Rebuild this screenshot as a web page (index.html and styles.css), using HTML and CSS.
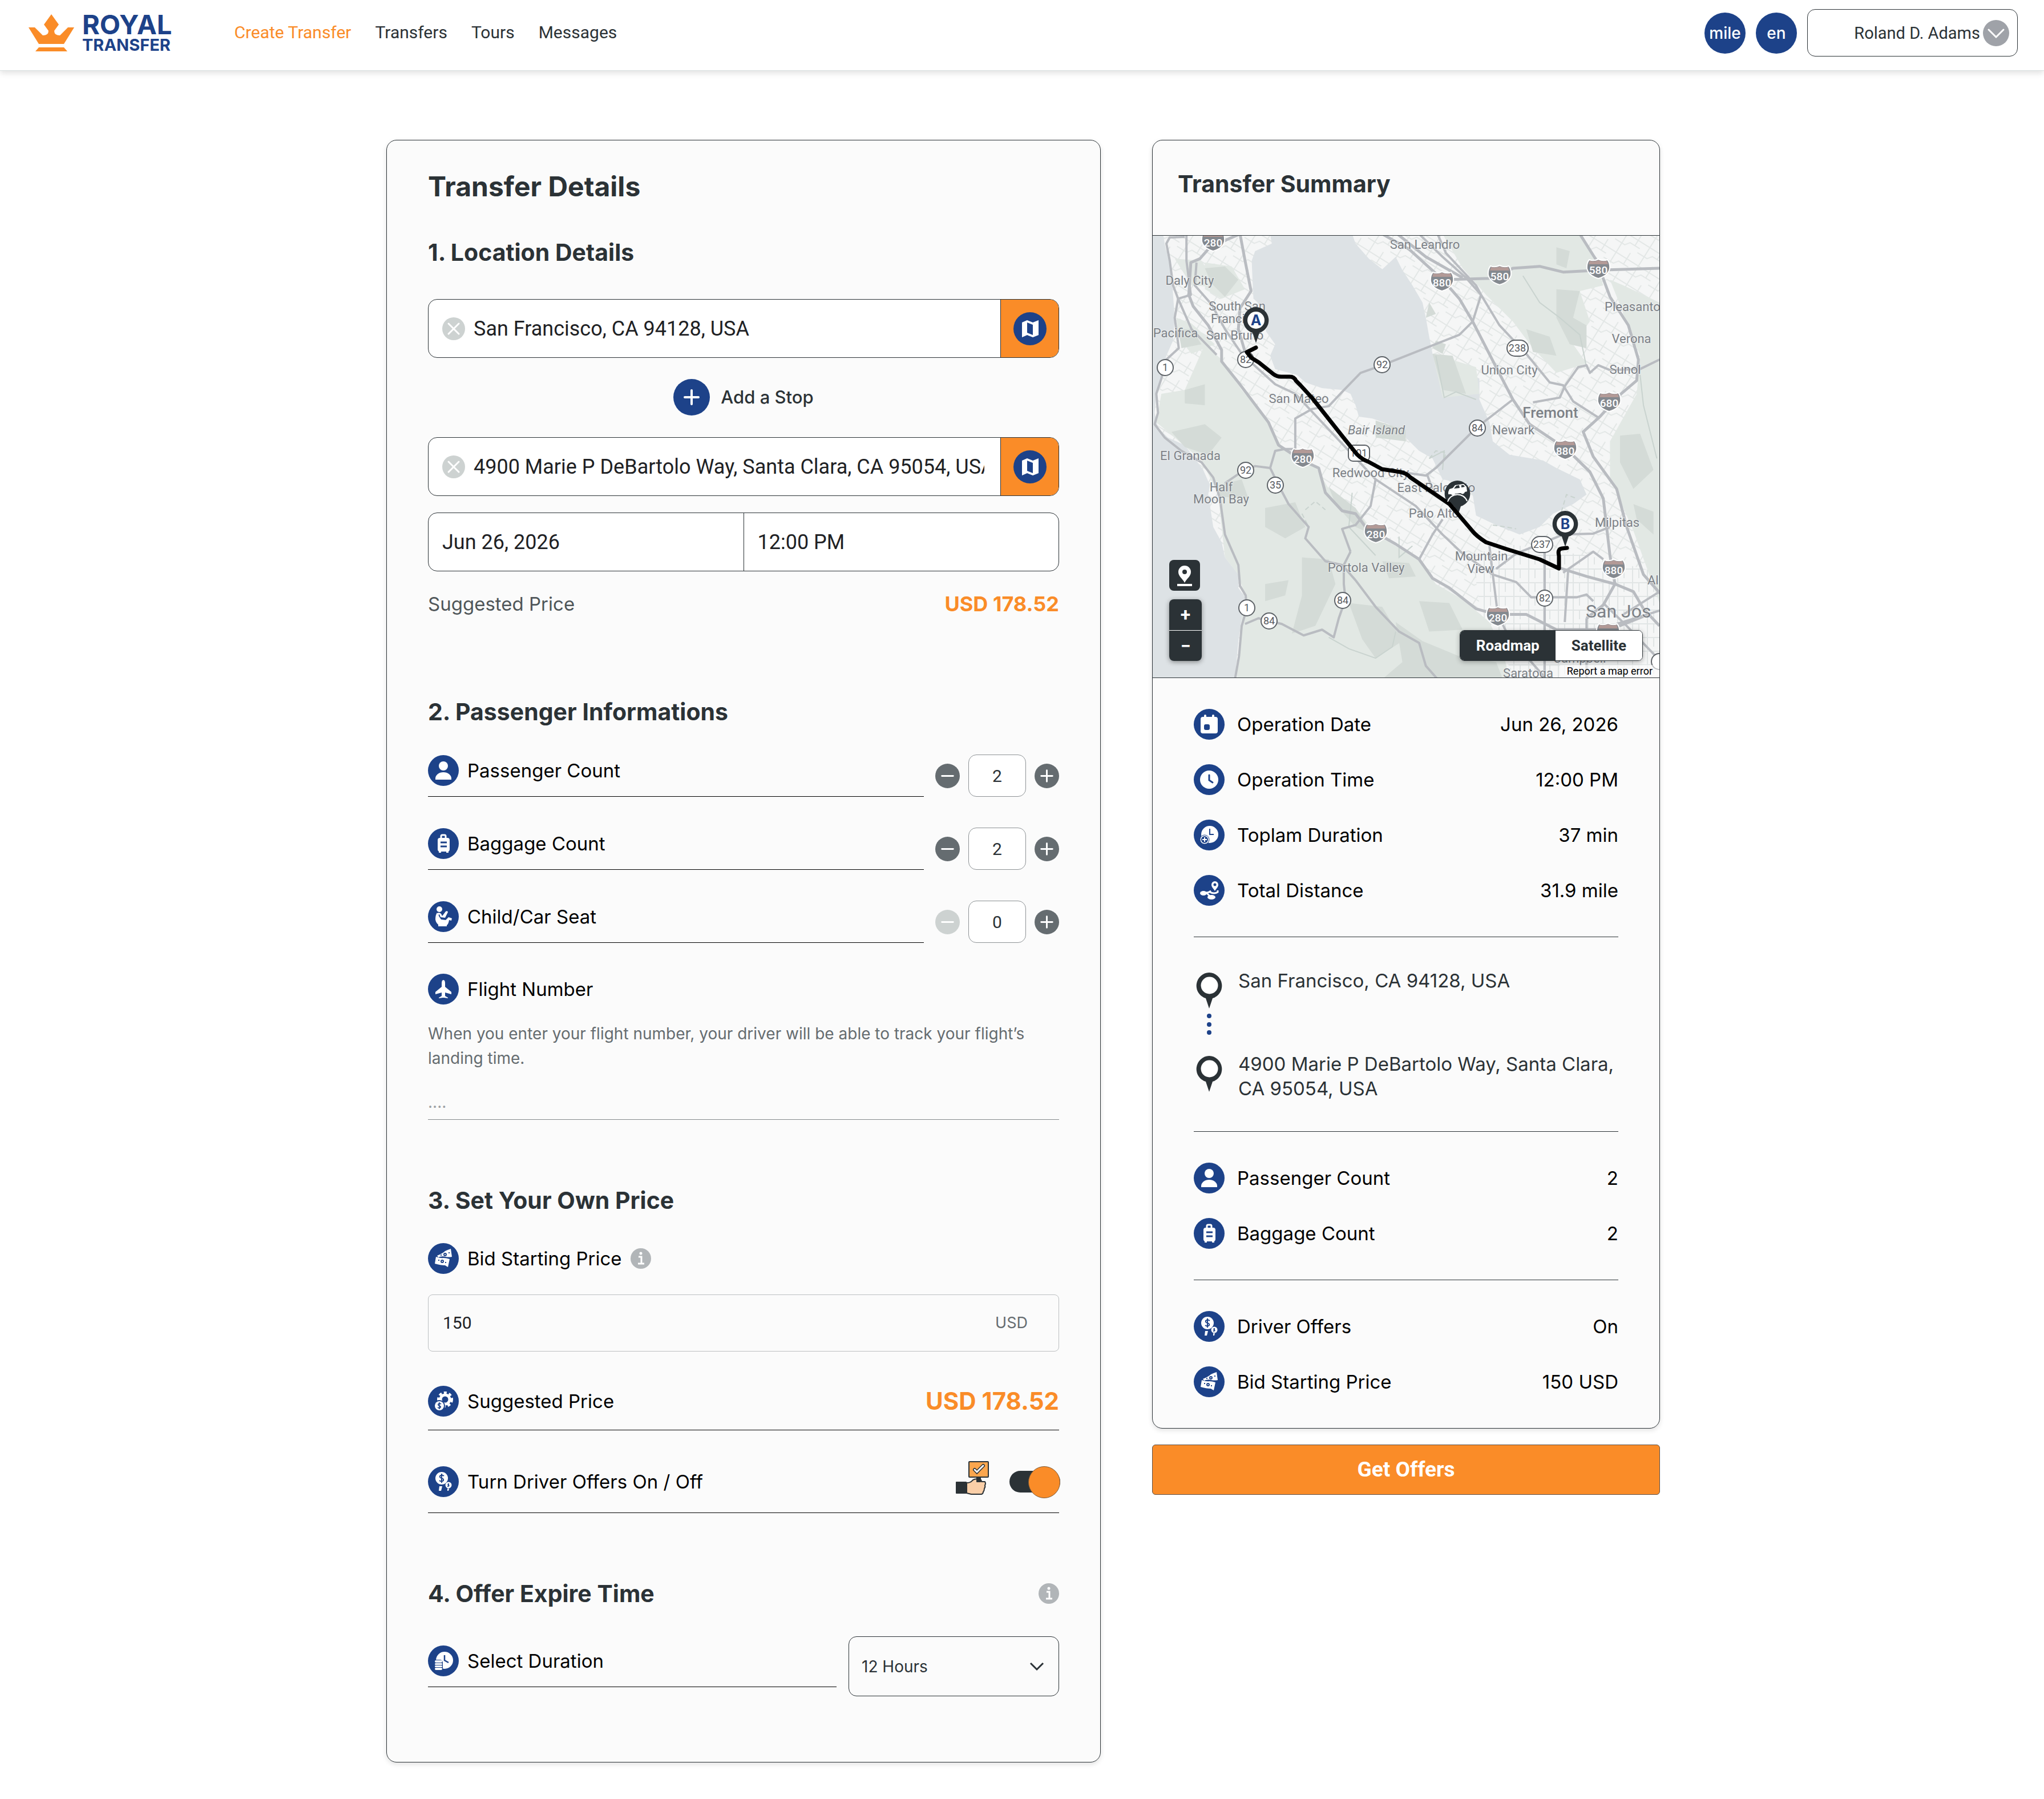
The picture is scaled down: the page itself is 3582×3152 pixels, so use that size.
FILE: index.html
```html
<!DOCTYPE html>
<html lang="en">
<head>
<meta charset="utf-8">
<meta name="viewport" content="width=device-width, initial-scale=1">
<title>Royal Transfer – Create Transfer</title>
<link rel="stylesheet" href="styles.css">
</head>
<body>

<svg class="sprite" aria-hidden="true">
  <symbol id="i-user" viewBox="0 0 54 54"><circle cx="27" cy="27" r="27" fill="#1d4289"/><g fill="#fff"><circle cx="27" cy="19" r="8"/><path d="M13 43v-2a14 11 0 0 1 28 0v2z"/></g></symbol>
  <symbol id="i-bag" viewBox="0 0 54 54"><circle cx="27" cy="27" r="27" fill="#1d4289"/><path d="M23 18v-4a2 2 0 0 1 2-2h4a2 2 0 0 1 2 2v4" fill="none" stroke="#fff" stroke-width="3"/><rect x="17" y="17" width="21" height="24" rx="4" fill="#fff"/><path d="M19 40h4v3h-4zM32 40h4v3h-4z" fill="#fff"/><path d="M22 25h11M22 32h11" stroke="#1d4289" stroke-width="3"/></symbol>
  <symbol id="i-child" viewBox="0 0 54 54"><circle cx="27" cy="27" r="27" fill="#1d4289"/><g fill="#fff"><circle cx="20" cy="14" r="5"/><path d="M16 21q4-2 7 1l2 4 6-8q3-2 4 1l-5 10-8-1-2-5q-2 0-1 3l4 6 8 1 5-5 6 2-1 4-4-1q-1 7-4 9v2H18v-3q-4-3-5-9 0-8 3-12z"/></g></symbol>
  <symbol id="i-plane" viewBox="0 0 54 54"><circle cx="27" cy="27" r="27" fill="#1d4289"/><path d="M27 11q3 0 3 6v6l11 9v4l-11-3v6l5 3v1l-7-1h-2l-7 1v-1l5-3v-6l-11 3v-4l11-9v-6q0-6 3-6z" fill="#fff"/></symbol>
  <symbol id="i-money" viewBox="0 0 54 54"><circle cx="27" cy="27" r="27" fill="#1d4289"/><g fill="#fff"><path d="M16 22q10-4 14-8 4-2 10-4l2 14q-6 1-11 0-7-2-13 1z"/><path d="M14 24q9 3 13 2 5 0 11 2l-3 14q-2-1-5-3-8 0-18-3z"/></g><g fill="none" stroke="#1d4289" stroke-width="2"><circle cx="30" cy="20" r="2"/><circle cx="25" cy="32" r="2"/></g><path d="M22 21h2M36 17h2M18 30h2M30 34h2" stroke="#1d4289" stroke-width="2"/></symbol>
  <symbol id="i-gear" viewBox="0 0 54 54"><circle cx="27" cy="27" r="27" fill="#1d4289"/><circle cx="30" cy="24" r="8" fill="none" stroke="#fff" stroke-width="5"/><circle cx="30" cy="24" r="12" fill="none" stroke="#fff" stroke-width="4" stroke-dasharray="5 4"/><circle cx="20" cy="35" r="10" fill="#1d4289"/><circle cx="20" cy="35" r="8" fill="#fff"/><path d="M23 32q-3-2-5 0-1 2 2 3t2 3q-2 2-5 0M20 29v12" fill="none" stroke="#1d4289" stroke-width="1.6"/></symbol>
  <symbol id="i-paddle" viewBox="0 0 54 54"><circle cx="27" cy="27" r="27" fill="#1d4289"/><g fill="#fff"><circle cx="24" cy="21" r="11"/><circle cx="36" cy="33" r="5.500"/><path d="M20 35h5l-2 8h-4zM34 39h3l-1 4h-2z"/></g><path d="M28 17q-4-3-7 0-1 3 3 4t3 4q-3 3-7 0M24 13v16M37 31q-3 0-1 2t-2 2" fill="none" stroke="#1d4289" stroke-width="2"/></symbol>
  <symbol id="i-timecoin" viewBox="0 0 54 54"><circle cx="27" cy="27" r="27" fill="#1d4289"/><circle cx="29" cy="26" r="15" fill="#fff"/><path d="M29 17v9l7 4" fill="none" stroke="#1d4289" stroke-width="2.500"/><rect x="10" y="25" width="16" height="20" rx="5" fill="#1d4289"/><g fill="#fff"><rect x="12" y="26" width="13" height="4" rx="2"/><rect x="12" y="31" width="13" height="3" rx="1.500"/><rect x="12" y="35" width="13" height="3" rx="1.500"/><rect x="12" y="39" width="13" height="4" rx="2"/></g></symbol>
  <symbol id="i-cal" viewBox="0 0 54 54"><circle cx="27" cy="27" r="27" fill="#1d4289"/><rect x="12" y="14" width="30" height="29" rx="4" fill="#fff"/><path d="M20 12v5M34 12v5" stroke="#fff" stroke-width="4" stroke-linecap="round"/><rect x="18" y="27" width="10" height="10" rx="3" fill="#1d4289"/></symbol>
  <symbol id="i-clock" viewBox="0 0 54 54"><circle cx="27" cy="27" r="27" fill="#1d4289"/><circle cx="27" cy="27" r="16" fill="#fff"/><path d="M27 19v9l6 4" fill="none" stroke="#1d4289" stroke-width="3" stroke-linecap="round"/></symbol>
  <symbol id="i-clockplus" viewBox="0 0 54 54"><circle cx="27" cy="27" r="27" fill="#1d4289"/><circle cx="28" cy="26" r="15" fill="#fff"/><path d="M28 16v10h7" fill="none" stroke="#1d4289" stroke-width="2"/><circle cx="19" cy="35" r="8" fill="#fff" stroke="#1d4289" stroke-width="1"/><circle cx="19" cy="35" r="6" fill="#1d4289"/><path d="M19 31v8M15 35h8" stroke="#fff" stroke-width="2"/></symbol>
  <symbol id="i-dist" viewBox="0 0 54 54"><circle cx="27" cy="27" r="27" fill="#1d4289"/><g fill="#fff"><path d="M37 11a6 6 0 0 1 6 6c0 4-3 6-6 11-3-5-6-7-6-11a6 6 0 0 1 6-6z"/><ellipse cx="17" cy="32" rx="6" ry="4"/><ellipse cx="31" cy="39" rx="7" ry="4"/></g><circle cx="37" cy="17" r="2.500" fill="#1d4289"/><path d="M17 31q8 1 13-3M22 31l8 8M28 30q8 4 14 0v-3" fill="none" stroke="#fff" stroke-width="3"/></symbol>
  <symbol id="i-info" viewBox="0 0 36 36"><circle cx="18" cy="18" r="18" fill="#b1b5b8"/><circle cx="18" cy="9" r="2.500" fill="#fff"/><path d="M14 15h5v12M13 27h11" fill="none" stroke="#fff" stroke-width="3"/></symbol>
  <symbol id="i-minus" viewBox="0 0 44 44"><circle cx="22" cy="22" r="22" fill="currentColor"/><path d="M12 22h20" stroke="#fff" stroke-width="3" stroke-linecap="round"/></symbol>
  <symbol id="i-plus" viewBox="0 0 44 44"><circle cx="22" cy="22" r="22" fill="currentColor"/><path d="M12 22h20M22 12v20" stroke="#fff" stroke-width="3" stroke-linecap="round"/></symbol>
  <symbol id="i-clear" viewBox="0 0 40 40"><circle cx="20" cy="20" r="20" fill="#cdd2d1"/><path d="M11 11l18 18M29 11L11 29" stroke="#fff" stroke-width="3" stroke-linecap="round"/></symbol>
  <symbol id="i-map" viewBox="0 0 58 58"><circle cx="29" cy="29" r="29" fill="#1d4289"/><path d="M15 18l9-4 10 4 10-4v26l-10 4-10-4-9 4z" fill="#fff"/><path d="M24 18l10 4v18l-10-4z" fill="#1d4289"/></symbol>
  <symbol id="i-pin" viewBox="0 0 48 64"><path d="M24 1a23 23 0 0 1 6 45l-6 18-6-18A23 23 0 0 1 24 1z" fill="#2b3236"/><circle cx="24.500" cy="23.500" r="15" fill="#fff"/></symbol>
  <symbol id="m-pin" viewBox="0 0 46 64"><path d="M23 0a23 23 0 0 1 6 45l-6 18-6-18A23 23 0 0 1 23 0z" fill="#2b3236"/></symbol>
  <symbol id="m-shield" viewBox="0 0 44 36"><path d="M6 2q8 3 16-1 8 4 16 1 5 6 4 16-3 12-20 17Q5 30 2 18 1 8 6 2z" fill="#84898f" stroke="#fff" stroke-width="2"/><path d="M7 4q8 2 15-1 7 3 15 1l2 6H5z" fill="#b39a97"/></symbol>
</svg>

<header class="topbar">
  <a class="logo" href="#" aria-label="Royal Transfer">
    <svg class="logo-mark" viewBox="0 0 80 66" aria-hidden="true"><path d="M40 0l13 18-8 11q0 8 10 8l14-14h11L62 52H18L0 23h11l14 14q10 0 10-8l-8-11zM18 58h44l6 7H12z" fill="#fa8c28"/></svg>
    <span class="logo-text"><span class="logo-royal">ROYAL</span><span class="logo-transfer">TRANSFER</span></span>
  </a>
  <nav class="nav">
    <a class="active" href="#">Create Transfer</a>
    <a href="#">Transfers</a>
    <a href="#">Tours</a>
    <a href="#">Messages</a>
  </nav>
  <div class="top-actions">
    <button class="round-btn" type="button">mile</button>
    <button class="round-btn" type="button">en</button>
    <button class="user-btn" type="button">Roland D. Adams
      <svg class="user-chev" viewBox="0 0 46 46" aria-hidden="true"><circle cx="23" cy="23" r="23" fill="#9fa2a8"/><path d="M10 17l13 13 13-13" fill="none" stroke="#fff" stroke-width="3" stroke-linecap="round"/></svg>
    </button>
  </div>
</header>

<main class="page">
  <form class="card details">
    <h1>Transfer Details</h1>

    <section class="location">
      <h2>1. Location Details</h2>
      <div class="field place">
        <button class="icon-btn clear" type="button" aria-label="Clear pick-up"><svg><use href="#i-clear"/></svg></button>
        <input type="text" aria-label="Pick-up location" value="San Francisco, CA 94128, USA">
        <button class="icon-btn map-btn" type="button" aria-label="Pick on map"><svg><use href="#i-map"/></svg></button>
      </div>
      <button class="add-stop" type="button"><svg viewBox="0 0 64 64" aria-hidden="true"><circle cx="32" cy="32" r="32" fill="#1d4289"/><path d="M20 32h24M32 20v24" stroke="#fff" stroke-width="4" stroke-linecap="round"/></svg>Add a Stop</button>
      <div class="field place">
        <button class="icon-btn clear" type="button" aria-label="Clear drop-off"><svg><use href="#i-clear"/></svg></button>
        <input type="text" aria-label="Drop-off location" value="4900 Marie P DeBartolo Way, Santa Clara, CA 95054, USA">
        <button class="icon-btn map-btn" type="button" aria-label="Pick on map"><svg><use href="#i-map"/></svg></button>
      </div>
      <div class="field datetime">
        <input type="text" aria-label="Date" value="Jun 26, 2026">
        <input type="text" aria-label="Time" value="12:00 PM">
      </div>
      <div class="suggest"><span>Suggested Price</span><strong>USD 178.52</strong></div>
    </section>

    <section class="passengers">
      <h2>2. Passenger Informations</h2>
      <div class="count-row">
        <label class="line-label" for="pax"><svg class="badge"><use href="#i-user"/></svg>Passenger Count</label>
        <div class="stepper">
          <button class="icon-btn" type="button" aria-label="Fewer passengers"><svg><use href="#i-minus"/></svg></button>
          <input id="pax" type="text" inputmode="numeric" value="2">
          <button class="icon-btn" type="button" aria-label="More passengers"><svg><use href="#i-plus"/></svg></button>
        </div>
      </div>
      <div class="count-row">
        <label class="line-label" for="bags"><svg class="badge"><use href="#i-bag"/></svg>Baggage Count</label>
        <div class="stepper">
          <button class="icon-btn" type="button" aria-label="Fewer bags"><svg><use href="#i-minus"/></svg></button>
          <input id="bags" type="text" inputmode="numeric" value="2">
          <button class="icon-btn" type="button" aria-label="More bags"><svg><use href="#i-plus"/></svg></button>
        </div>
      </div>
      <div class="count-row">
        <label class="line-label" for="seats"><svg class="badge"><use href="#i-child"/></svg>Child/Car Seat</label>
        <div class="stepper">
          <button class="icon-btn" type="button" aria-label="Fewer seats" disabled><svg><use href="#i-minus"/></svg></button>
          <input id="seats" type="text" inputmode="numeric" value="0">
          <button class="icon-btn" type="button" aria-label="More seats"><svg><use href="#i-plus"/></svg></button>
        </div>
      </div>
      <label class="item-label flight-label" for="flight"><svg class="badge"><use href="#i-plane"/></svg>Flight Number</label>
      <p class="hint">When you enter your flight number, your driver will be able to track your flight’s landing time.</p>
      <input class="flight" id="flight" type="text" placeholder="....">
    </section>

    <section class="price">
      <h2>3. Set Your Own Price</h2>
      <label class="item-label" for="bid"><svg class="badge"><use href="#i-money"/></svg>Bid Starting Price<svg class="info"><use href="#i-info"/></svg></label>
      <div class="bid"><input id="bid" type="text" inputmode="numeric" value="150"><span>USD</span></div>
      <div class="ruled suggested"><span class="item-label"><svg class="badge"><use href="#i-gear"/></svg>Suggested Price</span><strong>USD 178.52</strong></div>
      <div class="ruled offers-row">
        <label class="item-label" for="offers"><svg class="badge"><use href="#i-paddle"/></svg>Turn Driver Offers On / Off</label>
        <span class="offers-side">
          <svg class="hand" viewBox="0 0 60 60" aria-hidden="true"><g stroke="#2b3236" stroke-width="2" stroke-linejoin="round"><path d="M19 39q7 0 10-4 3-3 10-3 6 0 6 5h6q2 4 0 6 1 4-1 6 0 4-2 6 0 3-3 4H27l-8-2z" fill="#fbcfa8"/><rect x="1" y="38" width="17" height="19" fill="#2b3236"/><rect x="37" y="29" width="6" height="8" fill="#2b3236"/><rect x="23" y="2" width="34" height="27" rx="1" fill="#fba64e"/></g><path d="M33 16l4 4 11-11" fill="none" stroke="#2b3236" stroke-width="6" stroke-linecap="round"/><path d="M33 16l4 4 11-11" fill="none" stroke="#fff" stroke-width="3" stroke-linecap="round"/></svg>
          <input class="toggle" id="offers" type="checkbox" checked>
        </span>
      </div>
    </section>

    <section class="expire">
      <div class="head-row"><h2>4. Offer Expire Time</h2><svg class="info"><use href="#i-info"/></svg></div>
      <div class="duration-row">
        <label class="line-label" for="duration"><svg class="badge"><use href="#i-timecoin"/></svg>Select Duration</label>
        <div class="select-wrap">
          <select id="duration"><option>12 Hours</option><option>24 Hours</option></select>
          <svg class="chev" viewBox="0 0 26 16" aria-hidden="true"><path d="M2 2l11 11L24 2" fill="none" stroke="#2b3236" stroke-width="3"/></svg>
        </div>
      </div>
    </section>
  </form>

  <aside class="side">
    <div class="card summary">
      <h2 class="summary-title">Transfer Summary</h2>
      <div class="map">
        <svg class="map-canvas" viewBox="0 0 888 774" preserveAspectRatio="xMidYMid slice" role="img" aria-label="Route map">
          <defs>
            <pattern id="streets" width="46" height="38" patternUnits="userSpaceOnUse" patternTransform="rotate(32)"><path d="M0 12h46M0 31h20l6-8h20M14 0v38M36 0v23" fill="none" stroke="#e3e7e6" stroke-width="2"/></pattern>
            <pattern id="blocks" width="26" height="24" patternUnits="userSpaceOnUse"><path d="M0 8h26M9 0v24M20 8v16" fill="none" stroke="#e1e5e5" stroke-width="2"/></pattern>
          </defs>
          <rect width="888" height="774" fill="#f5f6f6"/>
          <rect width="888" height="774" fill="url(#streets)"/>
          <path d="M560 560l60-20 140 20 128 30v184H640l-60-80z" fill="#f5f6f6"/>
          <path d="M560 560l60-20 140 20 128 30v184H640l-60-80z" fill="url(#blocks)"/>
          <g transform="matrix(.5867 0 0 .3333 -20 -23)">
            <path fill="#dde2e5" d="M385 60L390 110 340 150 330 200 332 290 335 400 360 440 380 500 372 570 400 640 385 700 400 770 465 800 490 840 540 870 600 880 625 900 640 960 650 1020 690 1030 740 1060 790 1130 830 1200 870 1240 900 1350 960 1370 990 1430 1000 1540 1060 1590 1130 1640 1190 1600 1230 1530 1290 1480 1330 1430 1310 1350 1240 1290 1200 1250 1100 1220 1050 1150 1040 1050 1010 930 1010 820 870 690 860 600 850 500 840 420 810 330 780 250 760 180 720 245 680 190 640 110 630 60z"/>
            <path fill="#dde2e5" d="M33 60H65L72 130 90 250 95 380 100 500 95 620 75 700 60 800 45 900 40 1000 50 1080 80 1130 130 1170 160 1240 185 1300 205 1380 200 1430 215 1600 240 1680 250 1760 290 1850 290 1920 310 1970 300 2080 290 2200 280 2400H33z"/>
            <g fill="#e2e8e4">
              <path d="M190 640L240 720 300 880 370 1020 420 1180 520 1280 560 1400 640 1500 700 1640 830 1770 880 1900 960 1980 1040 2100 1080 2250 1100 2400H285L300 2080 310 1960 290 1850 250 1760 240 1600 230 1430 180 1250 100 1130 45 1050 60 900 130 880z"/>
              <path d="M900 60H1310L1360 220 1380 330 1310 360 1340 520 1290 640 1330 740 1240 790 1170 660 1110 520 1030 380 960 240z"/>
              <path d="M1400 300L1440 330 1548 420V2000L1470 1620 1400 1340 1400 1150 1480 900 1490 700z"/>
              <path d="M100 190L180 200 230 340 150 330zM190 210L270 230 310 350 240 400 190 350zM105 500L150 530 220 640 150 690 110 600zM870 690L1000 760 1010 900 900 920z"/>
            </g>
            <g fill="#d4dbd7">
              <path d="M190 240L250 230 290 300 250 390 210 320zM110 560L150 560 180 640 120 660zM90 1100L190 1060 240 1130 200 1220 130 1180zM130 880L190 850 190 960 130 950zM230 1380L300 1350 320 1450 230 1440zM1240 350L1310 360 1290 500 1330 540 1330 660 1280 640 1240 500zM1150 560L1220 600 1240 700 1170 680zM1240 130L1280 150 1270 240 1240 220zM870 690L930 700 970 900 900 880zM700 1040L790 1090 790 1150 700 1130zM370 1500L460 1470 490 1600 430 1660 370 1600zM480 1760L560 1770 580 1900 520 2120 450 2160 480 1960zM370 1900L440 1880 430 1960 370 1990zM560 1390L640 1500 690 1640 640 1600 580 1480zM720 1780L800 1790 820 1860 740 1870zM830 1990L920 2000 960 2140 860 2150zM620 2000L720 2020 780 2200 700 2290 660 2190zM760 2100L840 2200 950 2280 1060 2310 1080 2400H720L780 2310zM1430 1120L1490 1110 1530 1300 1470 1400 1430 1260zM1470 1480L1530 1520 1530 1640 1480 1560zM860 420L880 480 850 500zM880 620L910 640 900 690 870 660z"/>
            </g>
            <g class="land-line" fill="none" stroke="#c9d3cf">
              <path d="M1140 280L1190 420 1250 500 1310 590 1330 760M1540 1240L1500 960 1490 800M860 1240L905 1200 900 1300M880 700L905 920 940 890 1000 930M630 1420L620 1600 700 1750M770 1650V1760L810 1700M560 2180L620 2240 700 2290 750 2230 760 2150"/>
              <path class="dash" d="M490 1510L520 1465 550 1510M480 1530L500 1600M1050 1590L1090 1600 1120 1610M1255 1520L1270 1430 1300 1450M860 1240L880 1200 910 1210 900 1270"/>
            </g>
            <g class="roads" fill="none" stroke="#b9bcc1" stroke-linejoin="round">
              <path d="M130 75L85 78 75 110 85 200 95 330 110 400 100 500 112 660 75 720 60 820 45 900 50 1000 40 1060 70 1130 120 1200 180 1260 215 1340 235 1450 250 1640 290 1800 295 1910 312 1960 315 2030 300 2120 292 2280 280 2400"/>
              <path class="wide" d="M295 60L255 90 200 140 175 190 148 210 142 380 155 440 200 540 240 670 240 730 290 840 320 910 380 1050 410 1170 480 1250 530 1290 550 1420 600 1515 640 1530 670 1600 760 1690 830 1770 870 1870 920 1920 1000 2030 1060 2060H1150L1240 2140H1400L1500 2070"/>
              <path class="wide" d="M295 60L310 200 328 360 295 450 290 560 310 680M1248 1815L1330 1860 1415 1900 1470 1940 1500 2030 1548 2120"/>
              <path d="M135 69V200L148 380 110 400 150 560 225 695M165 210L160 330 210 430 250 560 300 690 400 850 460 900 620 1200 700 1350 820 1490 900 1640 960 1740 1050 1850 1120 1890 1165 1970H1300L1330 1955 1350 1990"/>
              <path d="M250 1370L300 1310 340 1280 385 1290 400 1200 430 1190 460 1190V1030L510 980 560 965 600 890 655 790 720 750 950 590 990 520 1015 380"/>
              <path class="wide" d="M720 60L800 140 900 300 950 400 990 520 1060 760 1110 930 1160 1060 1270 1190 1340 1310 1380 1450 1400 1750 1415 1900 1380 2010 1330 2080"/>
              <path class="wide" d="M765 60L850 180 960 290M900 300L1040 293 1070 280 1110 240 1190 230 1260 260 1370 250 1550 240"/>
              <path d="M830 60L900 180 970 290 1015 380 1070 540 1150 690 1220 840 1260 855 1290 940 1370 1030M885 60L910 160 1000 330 1015 380"/>
              <path class="wide" d="M1310 60L1360 200 1400 390 1455 540 1485 720 1480 830 1430 905 1370 1020 1320 1100 1350 1230 1420 1400 1450 1600 1500 1850 1550 1950"/>
              <path d="M790 1315L850 1330 880 1290 960 1150 1000 1080 1110 930M1170 945L1250 920 1265 860 1305 760 1330 750 1340 790 1365 750 1400 775 1490 770 1548 720M855 1330L870 1400"/>
              <path d="M1060 1820L1120 1740 1190 1690 1260 1640 1350 1635 1400 1600M1040 1700L1050 1850 1065 2060 1090 2150 1160 2300 1210 2400M1205 1690V2390M1275 1830L1265 2100M1260 1840L1350 1730 1380 1770M700 1350L685 1490 640 1590 600 1610 625 1730"/>
              <path d="M385 1290L410 1380 440 1480 500 1600 490 1660 550 1780 600 1800 640 1880 700 2020 770 2150 830 2210 850 2330 885 2400M625 1730L605 1800V1900L610 1980 590 2080 575 2180 540 2140 485 2170 420 2110 350 2080 310 2110M1380 2000L1450 2120 1548 2300M1420 2110L1548 2040M1330 2080V2395M1440 2060L1548 1940M900 1560L870 1640 830 1770"/>
            </g>
          </g>
          <g class="labels">
            <text x="477" y="23">San Leandro</text><text x="65" y="86">Daly City</text><text x="148" y="131">South San</text><text x="102" y="153" class="start">Francisco</text><text x="144" y="182">San Bruno</text><text x="40" y="178">Pacifica</text><text x="792" y="132" class="start">Pleasanto</text><text x="839" y="188">Verona</text><text x="828" y="242">Sunol</text><text x="625" y="243">Union City</text><text x="697" y="319" class="mid">Fremont</text><text x="632" y="348">Newark</text><text x="256" y="293">San Mateo</text><text x="392" y="348" class="it">Bair Island</text><text x="66" y="393">El Granada</text><text x="382" y="423">Redwood City</text><text x="120" y="448">Half</text><text x="120" y="469">Moon Bay</text><text x="497" y="449">East Palo Alto</text><text x="493" y="494">Palo Alto</text><text x="814" y="510">Milpitas</text><text x="576" y="569">Mountain</text><text x="575" y="591">View</text><text x="374" y="589">Portola Valley</text><text x="759" y="669" class="start big">San Jos</text><text x="867" y="611" class="start">Al</text><text x="658" y="774">Saratoga</text><text x="748" y="748">Campbell</text>
          </g>
          <g class="shields">
            <use href="#m-shield" x="84" y="-8" width="44" height="36"/><text x="106" y="19">280</text>
            <use href="#m-shield" x="485" y="62" width="44" height="36"/><text x="507" y="89">880</text>
            <use href="#m-shield" x="586" y="51" width="44" height="36"/><text x="608" y="78">580</text>
            <use href="#m-shield" x="759" y="40" width="44" height="36"/><text x="781" y="67">580</text>
            <use href="#m-shield" x="778" y="273" width="44" height="36"/><text x="800" y="300">680</text>
            <use href="#m-shield" x="701" y="357" width="44" height="36"/><text x="723" y="384">880</text>
            <use href="#m-shield" x="241" y="371" width="44" height="36"/><text x="263" y="398">280</text>
            <use href="#m-shield" x="369" y="503" width="44" height="36"/><text x="391" y="530">280</text>
            <use href="#m-shield" x="786" y="566" width="44" height="36"/><text x="808" y="593">880</text>
            <use href="#m-shield" x="583" y="649" width="44" height="36"/><text x="605" y="676">280</text>
            <use href="#m-shield" x="776" y="678" width="44" height="36"/>
          </g>
          <g class="routes">
            <circle cx="163" cy="217" r="14"/><text x="163" y="223">82</text>
            <circle cx="22" cy="231" r="14"/><text x="22" y="237">1</text>
            <circle cx="402" cy="226" r="14"/><text x="402" y="232">92</text>
            <circle cx="569" cy="337" r="14"/><text x="569" y="343">84</text>
            <rect x="621" y="183" width="37" height="28" rx="14"/><text x="639" y="203">238</text>
            <rect x="343" y="367" width="37" height="28" rx="8"/><text x="361" y="387">101</text>
            <circle cx="163" cy="411" r="14"/><text x="163" y="417">92</text>
            <circle cx="215" cy="437" r="14"/><text x="215" y="443">35</text>
            <circle cx="333" cy="639" r="14"/><text x="333" y="645">84</text>
            <circle cx="204" cy="675" r="14"/><text x="204" y="681">84</text>
            <circle cx="165" cy="652" r="14"/><text x="165" y="658">1</text>
            <rect x="664" y="527" width="37" height="28" rx="14"/><text x="682" y="547">237</text>
            <circle cx="687" cy="635" r="14"/><text x="687" y="641">82</text>
            <circle cx="888" cy="746" r="14"/>
          </g>
          <use href="#m-pin" x="511" y="429" width="46" height="64"/>
          <path class="trip" d="M181 196L165 204 173 214 186 222 211 242Q217 247 225 247L240 247Q248 247 251 254L259 262 280 285 329 347 358 383Q367 392 378 396L402 409 434 414Q445 416 451 423L520 470 560 517Q567 526 584 537L620 549 678 567 712 583 712 561Q709 549 717 548L726 547"/>
          <path d="M517 466a18 18 0 0 1 34-1" fill="none" stroke="#fff" stroke-width="2"/>
          <path d="M518 449l2-5 6-2 4-5 15-2 5 5 1 8-4 1a4 4 0 0 1-7 2l-10 1a4 4 0 0 1-7 1h-5z" fill="#fff"/><path d="M528 443l4-5 5-1 1 5zM541 441v-4l4 0 2 3z" fill="#2b3236"/>
          <use href="#m-pin" x="158" y="125" width="46" height="64"/><circle cx="181" cy="148" r="15" fill="#fff"/><text class="pin-letter" x="181" y="157">A</text>
          <use href="#m-pin" x="700" y="482" width="46" height="64"/><circle cx="723" cy="505" r="15" fill="#fff"/><text class="pin-letter" x="723" y="514">B</text>
        </svg>
        <div class="map-left">
          <button class="map-ctl locate" type="button" aria-label="Centre on route"><svg viewBox="0 0 54 54" aria-hidden="true"><path d="M27 10a11 11 0 0 1 11 11c0 8-7 11-11 19-4-8-11-11-11-19a11 11 0 0 1 11-11z" fill="#fff"/><circle cx="27" cy="21" r="4" fill="#2b3236"/><path d="M14 44h26" stroke="#fff" stroke-width="4"/></svg></button>
          <div class="zoomer"><button class="map-ctl" type="button">+</button><button class="map-ctl" type="button">−</button></div>
        </div>
        <div class="map-type"><button class="on" type="button">Roadmap</button><button type="button">Satellite</button></div>
        <a class="map-report" href="#">Report a map error</a>
      </div>
      <div class="summary-body">
        <dl class="facts">
          <div><dt><svg class="badge"><use href="#i-cal"/></svg>Operation Date</dt><dd>Jun 26, 2026</dd></div>
          <div><dt><svg class="badge"><use href="#i-clock"/></svg>Operation Time</dt><dd>12:00 PM</dd></div>
          <div><dt><svg class="badge"><use href="#i-clockplus"/></svg>Toplam Duration</dt><dd>37 min</dd></div>
          <div><dt><svg class="badge"><use href="#i-dist"/></svg>Total Distance</dt><dd>31.9 mile</dd></div>
        </dl>
        <ol class="stops">
          <li><span class="stop-mark"><svg class="stop-pin"><use href="#i-pin"/></svg><svg class="stop-dots" viewBox="0 0 10 40" aria-hidden="true"><g fill="#1d4289"><circle cx="5" cy="5" r="4"/><circle cx="5" cy="20" r="4"/><circle cx="5" cy="34" r="4"/></g></svg></span><span>San Francisco, CA 94128, USA</span></li>
          <li><span class="stop-mark"><svg class="stop-pin"><use href="#i-pin"/></svg></span><span>4900 Marie P DeBartolo Way, Santa Clara, CA 95054, USA</span></li>
        </ol>
        <dl class="facts">
          <div><dt><svg class="badge"><use href="#i-user"/></svg>Passenger Count</dt><dd>2</dd></div>
          <div><dt><svg class="badge"><use href="#i-bag"/></svg>Baggage Count</dt><dd>2</dd></div>
        </dl>
        <dl class="facts">
          <div><dt><svg class="badge"><use href="#i-paddle"/></svg>Driver Offers</dt><dd>On</dd></div>
          <div><dt><svg class="badge"><use href="#i-money"/></svg>Bid Starting Price</dt><dd>150 USD</dd></div>
        </dl>
      </div>
    </div>
    <button class="get-offers" type="button">Get Offers</button>
  </aside>
</main>
</body>
</html>
```
FILE: styles.css
```css
:root {
  --blue: #1d4289;
  --orange: #fa8c28;
  --ink: #2b3236;
  --ui: Inter, "Liberation Sans", sans-serif;
  --input: Roboto, "Liberation Sans", sans-serif;
}

* { box-sizing: border-box; }

body {
  margin: 0;
  background: #fff;
  color: var(--ink);
  font-family: var(--ui);
  font-size: 33px;
  line-height: 44px;
}

h1, h2, p, dl, dd, ol { margin: 0; padding: 0; }
button, input, select { font: inherit; color: inherit; margin: 0; }
button { cursor: pointer; }
a { color: inherit; text-decoration: none; }
svg { display: block; flex: none; }
.sprite { position: absolute; width: 0; height: 0; }

/* Top bar */
.topbar {
  display: flex;
  align-items: flex-start;
  height: 124px;
  padding: 16px 46px 0 50px;
  border-bottom: 1px solid #dbe1e1;
  box-shadow: 0 4px 10px rgba(0, 0, 0, .12);
}
.logo { display: flex; gap: 14px; padding-top: 9px; color: var(--blue); font-weight: 700; }
.logo-mark { width: 80px; height: 66px; }
.logo-text { display: flex; flex-direction: column; }
.logo-royal { font-size: 47px; line-height: 36px; }
.logo-transfer { font-size: 29px; line-height: 36px; }
.nav { display: flex; gap: 42px; margin-left: 109px; padding-top: 19px; font-family: var(--input); font-size: 30px; }
.nav .active { color: var(--orange); }
.top-actions { display: flex; align-items: center; gap: 18px; margin-left: auto; }
.round-btn { width: 72px; height: 72px; padding: 0; border: 0; border-radius: 50%; background: var(--blue); color: #fff; font-size: 28px; font-weight: 500; }
.user-btn { display: flex; align-items: center; justify-content: flex-end; gap: 5px; width: 369px; height: 83px; padding: 0 14px; border: 1px solid var(--ink); border-radius: 14px; background: #fff; font-family: var(--input); font-size: 29px; }
.user-chev { width: 46px; height: 46px; }

/* Page grid */
.page {
  display: grid;
  grid-template-columns: 1252fr 890fr;
  gap: 90px;
  align-items: start;
  max-width: 2236px;
  margin: 121px auto 64px;
  padding-left: 4px;
}
.card { border: 1px solid var(--ink); border-radius: 18px; background: #fbfbfb; box-shadow: 0 3px 8px rgba(0, 0, 0, .12); }

/* Details form */
.details { padding: 53px 72px 115px; }
h1 { font-size: 48px; line-height: 56px; font-weight: 700; }
h2 { font-size: 41px; line-height: 52px; font-weight: 700; }
.location { margin-top: 61px; }
.passengers { margin-top: 141px; }
.price, .expire { margin-top: 115px; }

.icon-btn { display: flex; align-items: center; justify-content: center; flex: none; padding: 0; border: 0; background: none; }
.field { display: flex; height: 103px; overflow: hidden; border: 1px solid var(--ink); border-radius: 16px; background: #fff; font-family: var(--input); font-size: 36px; color: #202124; }
.field input { flex: 1; min-width: 0; border: 0; outline: 0; background: none; }
.location h2 + .field { margin-top: 56px; }
.place { align-items: stretch; padding-left: 24px; }
.place input { margin: 0 28px 0 15px; padding: 0; }
.clear svg { width: 40px; height: 40px; }
.map-btn { width: 102px; border-left: 1px solid var(--ink); background: var(--orange); }
.map-btn svg { width: 58px; height: 58px; }
.add-stop { display: flex; align-items: center; gap: 19px; margin: 37px auto 38px; padding: 0; border: 0; background: none; font-size: 31px; font-weight: 500; }
.add-stop svg { width: 64px; height: 64px; }
.datetime { margin-top: 29px; }
.datetime input { padding: 0 24px; }
.datetime input + input { border-left: 1px solid var(--ink); }
.suggest { display: flex; justify-content: space-between; margin-top: 35px; color: #4f5659; }
strong { font-size: 36px; font-weight: 700; color: var(--orange); }

.badge { width: 54px; height: 54px; }
.item-label, .line-label { display: flex; align-items: center; gap: 15px; color: #000; }
.line-label { flex: 1; height: 74px; padding-bottom: 18px; border-bottom: 1px solid #000; }
.count-row { display: flex; gap: 20px; margin-top: 54px; }
h2 + .count-row { margin-top: 49px; }
.stepper { display: flex; align-items: center; gap: 15px; color: #656c70; }
.stepper svg { width: 43px; height: 43px; }
.stepper button:disabled { color: #cdd2d1; }
.stepper input { width: 101px; height: 74px; padding: 0; border: 1px solid #8d9295; border-radius: 14px; background: #fff; color: var(--ink); font-size: 30px; font-family: var(--input); text-align: center; }
.flight-label { margin-top: 54px; }
.hint { margin-top: 30px; font-size: 28px; line-height: 43px; color: #656c70; }
.flight { display: block; width: 100%; height: 62px; margin-top: 24px; padding: 0; border: 0; border-bottom: 1px solid #85898c; background: none; font-size: 28px; }
.flight::placeholder { color: #9a9ea1; }

.price h2 { margin-bottom: 49px; }
.info { width: 36px; height: 36px; }
.bid { display: flex; align-items: center; height: 100px; margin-top: 36px; padding: 0 54px 0 25px; border: 1px solid #bcbfc1; border-radius: 8px; font-size: 27px; color: #656c70; }
.bid input { flex: 1; min-width: 0; padding: 0; border: 0; background: none; color: #202124; font-family: var(--input); font-size: 30px; }
.ruled { display: flex; align-items: center; justify-content: space-between; border-bottom: 1px solid #000; }
.suggested { margin-top: 60px; padding-bottom: 23px; }
.suggested strong { font-size: 42px; }
.offers-row { margin-top: 63px; padding-bottom: 27px; }
.offers-side { display: flex; align-items: center; height: 54px; gap: 34px; }
.hand { width: 60px; height: 60px; margin-top: -14px; }
.toggle { position: relative; width: 89px; height: 38px; margin-right: -2px; appearance: none; border-radius: 19px; background: var(--ink); }
.toggle::before { content: ""; position: absolute; top: -8px; right: 0; width: 54px; height: 54px; border: 1px solid #7a5a3a; border-radius: 50%; background: var(--orange); }

.head-row { display: flex; align-items: center; justify-content: space-between; }
.duration-row { display: flex; align-items: flex-start; gap: 21px; margin-top: 49px; }
.duration-row .line-label { height: 89px; padding-top: 16px; }
.select-wrap { position: relative; width: 369px; }
.select-wrap select { width: 100%; height: 105px; padding: 0 22px; appearance: none; border: 1px solid var(--ink); border-radius: 14px; background: #fbfbfb; font-size: 28px; }
.chev { position: absolute; top: 45px; right: 26px; width: 26px; height: 16px; pointer-events: none; }

/* Summary */
.summary { overflow: hidden; }
.summary-title { padding: 50px 44px 64px; border-bottom: 1px solid var(--ink); }
.map { position: relative; overflow: hidden; border-bottom: 1px solid var(--ink); font-family: var(--input); }
.map-canvas { width: 100%; height: auto; }
.roads path, .land-line path { vector-effect: non-scaling-stroke; }
.land-line path { stroke-width: 2px; }
.land-line .dash { stroke-dasharray: 8 5; }
.roads path { stroke-width: 4px; }
.roads .wide { stroke-width: 5px; }
.labels text { font-size: 22px; fill: #7c8187; text-anchor: middle; paint-order: stroke; stroke: #f5f6f6; stroke-opacity: .6; stroke-width: 2px; }
.labels .start { text-anchor: start; }
.labels .mid { font-size: 26px; font-weight: 500; }
.labels .big { font-size: 32px; }
.labels .it { font-style: italic; }
.shields text { font-size: 19px; font-weight: 500; fill: #fff; text-anchor: middle; }
.routes circle, .routes rect { fill: #fff; stroke: #5d6267; stroke-width: 2px; }
.routes text { font-size: 18px; fill: #55595e; text-anchor: middle; }
.trip { fill: none; stroke: #000; stroke-width: 7px; stroke-linejoin: round; stroke-linecap: round; }
.pin-letter { font-family: var(--ui); font-size: 25px; font-weight: 700; fill: var(--blue); text-anchor: middle; }

.map-left { position: absolute; left: 29px; bottom: 29px; display: flex; flex-direction: column; gap: 15px; }
.map-ctl { display: flex; align-items: center; justify-content: center; width: 57px; height: 54px; padding: 0; border: 0; background: var(--ink); color: #fff; font-size: 32px; line-height: 32px; font-weight: 700; }
.locate { width: 54px; border-radius: 8px; }
.locate svg { width: 54px; height: 54px; }
.zoomer { overflow: hidden; border-radius: 8px; box-shadow: 0 2px 8px rgba(0, 0, 0, .4); }
.zoomer button + button { border-top: 1px solid #fff; }
.map-type { position: absolute; right: 29px; bottom: 29px; display: flex; height: 54px; overflow: hidden; border: 1px solid var(--ink); border-radius: 8px; box-shadow: 0 2px 8px rgba(0, 0, 0, .3); }
.map-type button { padding: 0 28px; border: 0; background: #fff; color: var(--ink); font-size: 26px; font-weight: 700; }
.map-type .on { background: var(--ink); color: #fff; }
.map-report { position: absolute; right: 0; bottom: 0; padding: 0 12px; background: rgba(255, 255, 255, .6); color: #000; font-size: 18px; line-height: 22px; }

.summary-body { padding: 0 72px; }
.facts { display: flex; flex-direction: column; gap: 43px; padding: 54px 0; }
.facts + .stops, .facts + .facts, .stops + .facts { border-top: 1px solid var(--ink); }
.facts div { display: flex; align-items: center; justify-content: space-between; color: #000; }
.facts dt { display: flex; align-items: center; gap: 22px; }
.stops { padding: 55px 0 53px; list-style: none; line-height: 43px; }
.stops li { display: flex; gap: 24px; }
.stops li + li { margin-top: 28px; }
.stop-mark { display: flex; flex: none; flex-direction: column; align-items: center; gap: 8px; width: 54px; padding-top: 6px; }
.stop-pin { width: 48px; height: 64px; }
.stop-dots { width: 10px; height: 40px; }

.get-offers { display: block; width: 100%; height: 88px; margin-top: 28px; border: 1px solid #5c5048; border-radius: 6px; background: var(--orange); color: #fff; font-family: var(--input); font-size: 37px; font-weight: 700; }
```
